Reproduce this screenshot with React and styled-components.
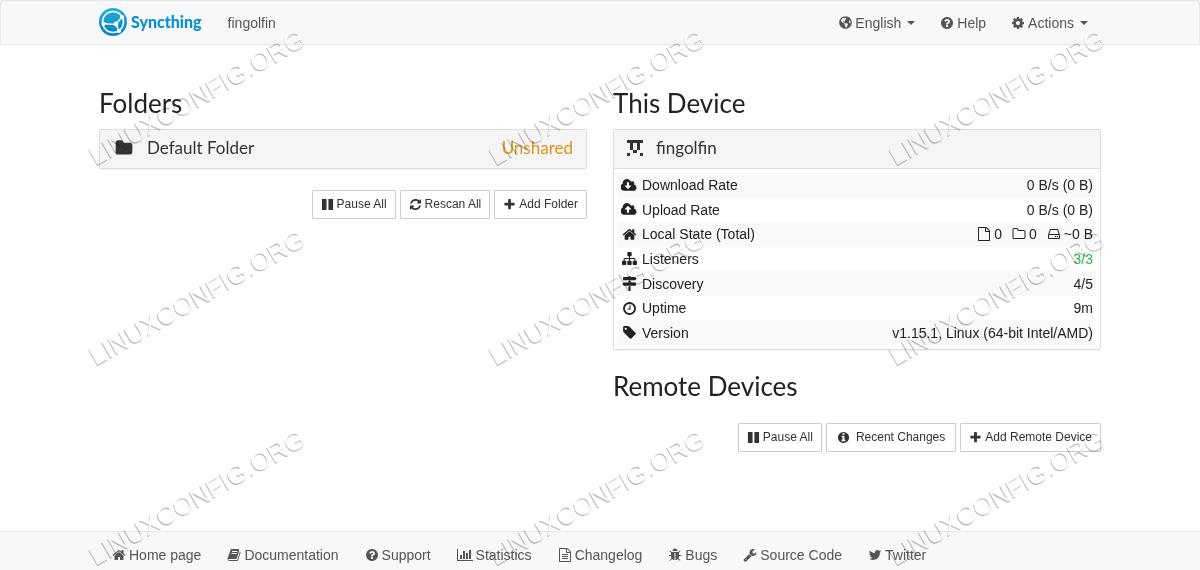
import React from "react";
import styled, { createGlobalStyle, css } from "styled-components";
import { FaGlobeAmericas } from "react-icons/fa";

const Global = createGlobalStyle`
  *, *::before, *::after { box-sizing: border-box; }
  body {
    margin: 0;
    background: #fff;
    color: #222;
    font: 14px/20px "Liberation Sans", Arial, sans-serif;
  }
`;

const disc =
  "q0 209-103 385.5t-279.5 279.5-385.5 103-385.5-103-279.5-279.5-103-385.5 103-385.5 279.5-279.5 385.5-103 385.5 103 279.5 279.5 103 385.5z";
const cloud =
  "q0 159-112.5 271.5t-271.5 112.5h-1088q-185 0-316.5-131.5t-131.5-316.5q0-130 70-240t188-165q-2-30-2-43 0-212 150-362t362-150q156 0 285.5 87t188.5 231q71-62 166-62 106 0 181 75t75 181q0 76-41 138 130 31 213.5 135.5t83.5 238.5z";
const sheet =
  "M1596 380q28 28 48 76t20 88v1152q0 40-28 68t-68 28h-1344q-40 0-68-28t-28-68v-1600q0-40 28-68t68-28h896q40 0 88 20t76 48zm-444-244v376h376q-10-29-22-41l-313-313q-12-12-41-22zm384 1528v-1024h-416q-40 0-68-28t-28-68v-416h-768v1536h1280z";

const glyphs = {
  home: "M1472 992v480q0 26-19 45t-45 19h-384v-384h-256v384h-384q-26 0-45-19t-19-45v-480q0-1 .5-3t.5-3l575-474 575 474q1 2 1 6zm223-69l-62 74q-8 9-21 11h-3q-13 0-21-7l-692-577-692 577q-12 8-24 7-13-2-21-11l-62-74q-8-10-7-23.5t11-21.5l719-599q32-26 76-26t76 26l244 204v-195q0-14 9-23t23-9h192q14 0 23 9t9 23v408l219 182q10 8 11 21.5t-7 23.5z",
  question:
    "M1024 1376v-192q0-14-9-23t-23-9h-192q-14 0-23 9t-9 23v192q0 14 9 23t23 9h192q14 0 23-9t9-23zm256-672q0-88-55.5-163t-138.5-116-170-41q-243 0-371 213-15 24 8 42l132 100q7 6 19 6 16 0 25-12 53-68 86-92 34-24 86-24 48 0 85.5 26t37.5 59q0 38-20 61t-68 45q-63 28-115.5 86.5t-52.5 125.5v36q0 14 9 23t23 9h192q14 0 23-9t9-23q0-19 21.5-49.5t54.5-49.5q32-18 49-28.5t46-35 44.5-48 28-60.5 12.5-81zm384 192" + disc,
  cog: "M1152 896q0-106-75-181t-181-75-181 75-75 181 75 181 181 75 181-75 75-181zm512-109v222q0 12-8 23t-20 13l-185 28q-19 54-39 91 35 50 107 138 10 12 10 25t-9 23q-27 37-99 108t-94 71q-12 0-26-9l-138-108q-44 23-91 38-16 136-29 186-7 28-36 28h-222q-14 0-24.5-8.5t-11.5-21.5l-28-184q-49-16-90-37l-141 107q-10 9-25 9-14 0-25-11-126-114-165-168-7-10-7-23 0-12 8-23 15-21 51-66.5t54-70.5q-27-50-41-99l-183-27q-13-2-21-12.5t-8-23.5v-222q0-12 8-23t19-13l186-28q14-46 39-92-40-57-107-138-10-12-10-24 0-10 9-23 26-36 98.5-107.5t94.5-71.5q13 0 26 10l138 107q44-23 91-38 16-136 29-186 7-28 36-28h222q14 0 24.5 8.5t11.5 21.5l28 184q49 16 90 37l142-107q9-9 24-9 13 0 25 10 129 119 165 170 7 8 7 22 0 12-8 23-15 21-51 66.5t-54 70.5q26 50 41 98l183 28q13 2 21 12.5t8 23.5z",
  plus: "M1600 736v192q0 40-28 68t-68 28h-416v416q0 40-28 68t-68 28h-192q-40 0-68-28t-28-68v-416h-416q-40 0-68-28t-28-68v-192q0-40 28-68t68-28h416v-416q0-40 28-68t68-28h192q40 0 68 28t28 68v416h416q40 0 68 28t28 68z",
  pause:
    "M1664 192v1408q0 26-19 45t-45 19h-512q-26 0-45-19t-19-45v-1408q0-26 19-45t45-19h512q26 0 45 19t19 45zm-896 0v1408q0 26-19 45t-45 19h-512q-26 0-45-19t-19-45v-1408q0-26 19-45t45-19h512q26 0 45 19t19 45z",
  refresh:
    "M1639 1056q0 5-1 7-64 268-268 434.5t-478 166.5q-146 0-282.5-55t-243.5-157l-129 129q-19 19-45 19t-45-19-19-45v-448q0-26 19-45t45-19h448q26 0 45 19t19 45-19 45l-137 137q71 66 161 102t187 36q134 0 250-65t186-179q11-17 53-117 8-23 30-23h192q13 0 22.5 9.5t9.5 22.5zm25-800v448q0 26-19 45t-45 19h-448q-26 0-45-19t-19-45 19-45l138-138q-148-137-349-137-134 0-250 65t-186 179q-11 17-53 117-8 23-30 23h-199q-13 0-22.5-9.5t-9.5-22.5v-7q65-268 270-434.5t480-166.5q146 0 284 55.5t245 156.5l130-129q19-19 45-19t45 19 19 45z",
  folder:
    "M1728 608v704q0 92-66 158t-158 66h-1216q-92 0-158-66t-66-158v-960q0-92 66-158t158-66h320q92 0 158 66t66 158v32h672q92 0 158 66t66 158z",
  folderOpenLine:
    "M1600 1312v-704q0-40-28-68t-68-28h-704q-40 0-68-28t-28-68v-64q0-40-28-68t-68-28h-320q-40 0-68 28t-28 68v960q0 40 28 68t68 28h1216q40 0 68-28t28-68zm128-704v704q0 92-66 158t-158 66h-1216q-92 0-158-66t-66-158v-960q0-92 66-158t158-66h320q92 0 158 66t66 158v32h672q92 0 158 66t66 158z",
  file: sheet,
  fileText:
    sheet +
    "m-1024-864q0-14 9-23t23-9h704q14 0 23 9t9 23v64q0 14-9 23t-23 9h-704q-14 0-23-9t-9-23v-64zm736 224q14 0 23 9t9 23v64q0 14-9 23t-23 9h-704q-14 0-23-9t-9-23v-64q0-14 9-23t23-9h704zm0 256q14 0 23 9t9 23v64q0 14-9 23t-23 9h-704q-14 0-23-9t-9-23v-64q0-14 9-23t23-9h704z",
  clock:
    "M1024 544v448q0 14-9 23t-23 9h-320q-14 0-23-9t-9-23v-64q0-14 9-23t23-9h224v-352q0-14 9-23t23-9h64q14 0 23 9t9 23zm416 352q0-148-73-273t-198-198-273-73-273 73-198 198-73 273 73 273 198 198 273 73 273-73 198-198 73-273zm224 0" + disc,
  info:
    "M1152 1376v-160q0-14-9-23t-23-9h-96v-512q0-14-9-23t-23-9h-320q-14 0-23 9t-9 23v160q0 14 9 23t23 9h96v320h-96q-14 0-23 9t-9 23v160q0 14 9 23t23 9h448q14 0 23-9t9-23zm-128-896v-160q0-14-9-23t-23-9h-192q-14 0-23 9t-9 23v160q0 14 9 23t23 9h192q14 0 23-9t9-23zm640 416" + disc,
  tag: "M576 448q0-53-37.5-90.5t-90.5-37.5-90.5 37.5-37.5 90.5 37.5 90.5 90.5 37.5 90.5-37.5 37.5-90.5zm1067 576q0 53-37 90l-491 492q-39 37-91 37-53 0-90-37l-715-716q-38-37-64.5-101t-26.5-117v-416q0-52 38-90t90-38h416q53 0 117 26.5t102 64.5l715 714q37 39 37 91z",
  download:
    "M1216 928q0-14-9-23t-23-9h-224v-352q0-13-9.5-22.5t-22.5-9.5h-192q-13 0-22.5 9.5t-9.5 22.5v352h-224q-13 0-22.5 9.5t-9.5 22.5q0 14 9 23l352 352q9 9 23 9t23-9l351-351q10-12 10-24zm640 224" + cloud,
  upload:
    "M1216 864q0-14-9-23l-352-352q-9-9-23-9t-23 9l-351 351q-10 12-10 24 0 14 9 23t23 9h224v352q0 13 9.5 22.5t22.5 9.5h192q13 0 22.5-9.5t9.5-22.5v-352h224q13 0 22.5-9.5t9.5-22.5zm640 288" + cloud,
  sitemap:
    "M1792 1248v320q0 40-28 68t-68 28h-320q-40 0-68-28t-28-68v-320q0-40 28-68t68-28h96v-192h-512v192h96q40 0 68 28t28 68v320q0 40-28 68t-68 28h-320q-40 0-68-28t-28-68v-320q0-40 28-68t68-28h96v-192h-512v192h96q40 0 68 28t28 68v320q0 40-28 68t-68 28h-320q-40 0-68-28t-28-68v-320q0-40 28-68t68-28h96v-192q0-52 38-90t90-38h512v-192h-96q-40 0-68-28t-28-68v-320q0-40 28-68t68-28h320q40 0 68 28t28 68v320q0 40-28 68t-68 28h-96v192h512q52 0 90 38t38 90v192h96q40 0 68 28t28 68z",
  signs:
    "M1745 297q10 10 10 23t-10 23l-141 141q-28 28-68 28h-1344q-26 0-45-19t-19-45v-256q0-26 19-45t45-19h576v-64q0-26 19-45t45-19h128q26 0 45 19t19 45v64h512q40 0 68 28zm-977 919h256v512q0 26-19 45t-45 19h-128q-26 0-45-19t-19-45v-512zm832-448q26 0 45 19t19 45v256q0 26-19 45t-45 19h-1344q-40 0-68-28l-141-141q-10-10-10-23t10-23l141-141q28-28 68-28h512v-192h256v192h576z",
  disk: "M1168 1216q0 33-23.5 56.5t-56.5 23.5-56.5-23.5-23.5-56.5 23.5-56.5 56.5-23.5 56.5 23.5 23.5 56.5zm256 0q0 33-23.5 56.5t-56.5 23.5-56.5-23.5-23.5-56.5 23.5-56.5 56.5-23.5 56.5 23.5 23.5 56.5zm112 160v-320q0-13-9.5-22.5t-22.5-9.5h-1216q-13 0-22.5 9.5t-9.5 22.5v320q0 13 9.5 22.5t22.5 9.5h1216q13 0 22.5-9.5t9.5-22.5zm-1230-480h1180l-157-482q-4-13-16-21.5t-26-8.5h-782q-14 0-26 8.5t-16 21.5zm1358 160v320q0 66-47 113t-113 47h-1216q-66 0-113-47t-47-113v-320q0-25 16-75l197-606q17-53 63-86t101-33h782q55 0 101 33t63 86l197 606q16 50 16 75z",
  book: "M1703 478q40 57 18 129l-275 906q-19 64-76.5 107.5t-122.5 43.5h-923q-77 0-148.5-53.5t-99.5-131.5q-24-67-2-127 0-4 3-27t4-37q1-8-3-21.5t-3-19.5q2-11 8-21t16.5-23.5 16.5-23.5q23-38 45-91.5t30-91.5q3-10 .5-30t-.5-28q3-11 17-28t17-23q21-36 42-92t25-90q1-9-2.5-32t.5-28q4-13 22-30.5t22-22.5q19-26 42.5-84.5t27.5-96.5q1-8-3-25.5t-2-26.5q2-8 9-18t18-23 17-21q8-12 16.5-30.5t15-35 16-36 19.5-32 26.5-23.5 36-11.5 47.5 5.5l-1 3q38-9 51-9h761q74 0 114 56t18 130l-274 906q-36 119-71.5 153.5t-128.5 34.5h-869q-27 0-38 15-11 16-1 43 24 70 144 70h923q29 0 56-15.5t35-41.5l300-987q7-22 5-57 38 15 59 43zm-1064 2q-4 13 2 22.5t20 9.5h608q13 0 25.5-9.5t16.5-22.5l21-64q4-13-2-22.5t-20-9.5h-608q-13 0-25.5 9.5t-16.5 22.5zm-83 256q-4 13 2 22.5t20 9.5h608q13 0 25.5-9.5t16.5-22.5l21-64q4-13-2-22.5t-20-9.5h-608q-13 0-25.5 9.5t-16.5 22.5z",
  chart:
    "M640 896v512h-256v-512h256zm384-512v1024h-256v-1024h256zm1024 1152v128h-2048v-1536h128v1408h1920zm-640-896v768h-256v-768h256zm384-384v1152h-256v-1152h256z",
  bug: "M1696 960q0 26-19 45t-45 19h-224q0 171-67 290l208 209q19 19 19 45t-19 45q-18 19-45 19t-45-19l-198-197q-5 5-15 13t-42 28.5-65 36.5-82 29-97 13v-896h-128v896q-51 0-101.5-13.5t-87-33-66-39-43.5-32.5l-15-14-183 207q-20 21-48 21-24 0-43-16-19-18-20.5-44.5t15.5-46.5l202-227q-58-114-58-274h-224q-26 0-45-19t-19-45 19-45 45-19h224v-294l-173-173q-19-19-19-45t19-45 45-19 45 19l173 173h844l173-173q19-19 45-19t45 19 19 45-19 45l-173 173v294h224q26 0 45 19t19 45zm-480-576h-640q0-133 93.5-226.5t226.5-93.5 226.5 93.5 93.5 226.5z",
  wrench:
    "M448 1472q0-26-19-45t-45-19-45 19-19 45 19 45 45 19 45-19 19-45zm644-420l-682 682q-37 37-90 37-52 0-91-37l-106-108q-38-36-38-90 0-53 38-91l681-681q39 98 114.5 173.5t173.5 114.5zm634-435q0 39-23 106-47 134-164.5 217.5t-258.5 83.5q-185 0-316.5-131.5t-131.5-316.5 131.5-316.5 316.5-131.5q58 0 121.5 16.5t107.5 46.5q16 11 16 28t-16 28l-293 169v224l193 107q5-3 79-48.5t135.5-81 70.5-35.5q15 0 23.5 10t8.5 25z",
  twitter:
    "M1684 408q-67 98-162 167 1 14 1 42 0 130-38 259.5t-115.5 248.5-184.5 210.5-258 146-323 54.5q-271 0-496-145 35 4 78 4 225 0 401-138-105-2-188-64.5t-114-159.5q33 5 61 5 43 0 85-11-112-23-185.5-111.5t-73.5-205.5v-4q68 38 146 41-66-44-105-115t-39-154q0-88 44-163 121 149 294.5 238.5t371.5 99.5q-8-38-8-74 0-134 94.5-228.5t228.5-94.5q140 0 236 102 109-21 205-78-37 115-142 178 93-10 186-50z",
};
const wide = { chart: 2048, download: 1920, upload: 1920 };

const Glyph = styled.svg`
  height: ${(p) => p.$size || 14}px;
  flex: none;
  fill: currentColor;
`;

function Icon({ name, size }) {
  return (
    <Glyph $size={size} viewBox={`0 0 ${wide[name] || 1792} 1792`} aria-hidden="true">
      <path d={glyphs[name]} />
    </Glyph>
  );
}

const Page = styled.div`
  position: relative;
  min-height: 100vh;
  display: flex;
  flex-direction: column;
  background: #fff;
`;

const Container = styled.div`
  width: 100%;
  max-width: 1034px;
  margin: 0 auto;
  padding: 0 16px;
`;

const NavBar = styled.header`
  background: #f8f8f8;
  border: 1px solid #e7e7e7;
  border-radius: 2px;
`;

const NavRow = styled(Container)`
  display: flex;
  align-items: center;
  height: 43px;
`;

const Brand = styled.a`
  display: flex;
  align-items: center;
  gap: 4px;
  padding-bottom: 1px;
  color: #0891d1;
  font: 900 16px/20px Lato, sans-serif;
  text-decoration: none;
  svg { width: 28px; height: 28px; }
`;

const DeviceName = styled.span`
  margin-left: 26px;
  color: #555;
`;

const NavMenu = styled.nav`
  display: flex;
  gap: 25px;
  margin-left: auto;
  padding-right: 13px;
`;

const navItem = css`
  display: inline-flex;
  align-items: center;
  gap: 3px;
  padding: 0;
  border: 0;
  background: none;
  color: #555;
  font: inherit;
  text-decoration: none;
`;
const NavLink = styled.a`${navItem}`;
const NavButton = styled.button`${navItem}`;

const Caret = styled.span`
  margin-left: 3px;
  border: 4px solid transparent;
  border-top-color: currentColor;
  border-bottom: 0;
`;

const Columns = styled(Container).attrs({ as: "main" })`
  display: grid;
  grid-template-columns: 1fr 1fr;
  gap: 26px;
  padding-top: 44px;
  padding-bottom: 40px;
`;

const Heading = styled.h2`
  margin: 0;
  padding-bottom: 12px;
  font: 400 26px/28px Lato, sans-serif;
`;

const Panel = styled.section`
  border: 1px solid #ddd;
  border-radius: 2px;
  box-shadow: 0 1px 1px rgba(0, 0, 0, 0.05);
`;

const PanelHead = styled.button`
  display: flex;
  align-items: center;
  gap: ${(p) => (p.$device ? 13 : 14)}px;
  width: 100%;
  height: 38px;
  padding: 0 13px 2px ${(p) => (p.$device ? 13 : 15)}px;
  border: 0;
  background: #f5f5f5;
  color: #333;
  font: 400 17px/20px Lato, sans-serif;
`;

const Status = styled.span`
  margin-left: auto;
  color: #de9319;
`;

const PanelBody = styled.div`
  padding: 4px;
  border-top: 1px solid #ddd;
`;

const Facts = styled.table`
  width: 100%;
  height: 172px;
  border-collapse: collapse;
  tr:nth-child(odd) { background: #f9f9f9; }
  th, td { padding: 0 3px; }
  th { text-align: left; font-weight: 400; }
`;

const Label = styled.span`
  display: grid;
  grid-template-columns: 16px 1fr;
  align-items: center;
  justify-items: center;
  gap: 5px;
  & > span { justify-self: start; }
`;

const Value = styled.span`
  display: flex;
  justify-content: flex-end;
  align-items: center;
  gap: 10px;
  color: ${(p) => (p.$good ? "#29b74e" : "inherit")};
`;

const Amount = styled.span`
  display: flex;
  align-items: center;
  gap: 3px;
`;

const Actions = styled.div`
  display: flex;
  justify-content: flex-end;
  gap: 4px;
  padding-top: ${(p) => (p.$tight ? 11 : 21)}px;
`;

const Button = styled.button`
  display: flex;
  align-items: center;
  gap: ${(p) => (p.$spaced ? 6 : 3)}px;
  height: 29px;
  padding: 0 ${(p) => (p.$spaced ? 10 : 8)}px 1px;
  border: 1px solid #ccc;
  border-radius: 1px;
  background: #fff;
  color: #333;
  font: 12px/18px "Liberation Sans", Arial, sans-serif;
`;

const Block = styled.div`
  margin-top: 22px;
`;

const Footer = styled.footer`
  margin-top: auto;
  padding: 13px 0 5px;
  border-top: 1px solid #e7e7e7;
  background: #f8f8f8;
`;

const FooterRow = styled(Container)`
  display: flex;
  flex-wrap: wrap;
  gap: 26px;
  padding-left: 29px;
`;

const Watermarks = styled.div`
  position: absolute;
  inset: 0;
  display: grid;
  grid-template-columns: repeat(3, 1fr);
  grid-auto-rows: 200px;
  place-items: center;
  overflow: hidden;
  pointer-events: none;
  mix-blend-mode: multiply;
`;

const Mark = styled.span`
  margin: 0 6px 6px 0;
  transform: rotate(-30deg);
  color: #fff;
  font-size: 26px;
  line-height: 28px;
  text-shadow: -1px 1px 0 #bbb;
`;

const Logo = () => (
  <svg viewBox="0 0 28 28" aria-hidden="true">
    <defs>
      <linearGradient id="brand" x1="0" y1="0" x2="0" y2="1">
        <stop offset="0" stopColor="#24b0d6" />
        <stop offset="1" stopColor="#0a7fc4" />
      </linearGradient>
    </defs>
    <circle cx="14" cy="14" r="14" fill="url(#brand)" />
    <g fill="none" stroke="#fff" strokeWidth="1.5">
      <circle cx="14" cy="14" r="10.5" />
      <path d="M17 16L23 9M17 16L20 23M17 16Q10 17 4 15" />
    </g>
    <g fill="#fff">
      <circle cx="17" cy="16" r="2.4" />
      <circle cx="23" cy="9" r="2" />
      <circle cx="20" cy="23" r="2" />
      <circle cx="4.500" cy="16" r="2" />
    </g>
  </svg>
);

const Identicon = () => (
  <svg width="16" height="16" viewBox="0 0 5 5" fill="#333" shapeRendering="crispEdges" aria-hidden="true">
    <path d="M0 0h5v1H0zM1 1h1v2H1zM3 1h1v2H3zM2 3h1v1H2zM0 4h1v1H0zM4 4h1v1H4z" />
  </svg>
);

const facts = [
  ["download", "Download Rate", "0 B/s (0 B)"],
  ["upload", "Upload Rate", "0 B/s (0 B)"],
  ["home", "Local State (Total)", null],
  ["sitemap", "Listeners", "3/3"],
  ["signs", "Discovery", "4/5"],
  ["clock", "Uptime", "9m"],
  ["tag", "Version", "v1.15.1, Linux (64-bit Intel/AMD)"],
];

const links = [
  ["home", "Home page"],
  ["book", "Documentation"],
  ["question", "Support"],
  ["chart", "Statistics"],
  ["fileText", "Changelog"],
  ["bug", "Bugs"],
  ["wrench", "Source Code"],
  ["twitter", "Twitter"],
];

export default function App() {
  return (
    <Page>
      <Global />
      <NavBar>
        <NavRow>
          <Brand href="#"><Logo />Syncthing</Brand>
          <DeviceName>fingolfin</DeviceName>
          <NavMenu>
            <NavButton><FaGlobeAmericas size={13} />English <Caret /></NavButton>
            <NavLink href="#help"><Icon name="question" />Help</NavLink>
            <NavButton><Icon name="cog" />Actions <Caret /></NavButton>
          </NavMenu>
        </NavRow>
      </NavBar>
      <Columns>
        <div>
          <Heading>Folders</Heading>
          <Panel>
            <PanelHead>
              <Icon name="folder" size={18} />
              Default Folder
              <Status>Unshared</Status>
            </PanelHead>
          </Panel>
          <Actions>
            <Button><Icon name="pause" size={13} />Pause All</Button>
            <Button><Icon name="refresh" size={13} />Rescan All</Button>
            <Button><Icon name="plus" size={13} />Add Folder</Button>
          </Actions>
        </div>
        <div>
          <Heading>This Device</Heading>
          <Panel>
            <PanelHead $device><Identicon />fingolfin</PanelHead>
            <PanelBody>
              <Facts>
                <tbody>
                  {facts.map(([icon, label, value]) => (
                    <tr key={label}>
                      <th scope="row"><Label><Icon name={icon} size={15} /><span>{label}</span></Label></th>
                      <td>
                        {value ? (
                          <Value $good={label === "Listeners"}>{value}</Value>
                        ) : (
                          <Value>
                            <Amount><Icon name="file" />0</Amount>
                            <Amount><Icon name="folderOpenLine" />0</Amount>
                            <Amount><Icon name="disk" />~0 B</Amount>
                          </Value>
                        )}
                      </td>
                    </tr>
                  ))}
                </tbody>
              </Facts>
            </PanelBody>
          </Panel>
          <Block>
            <Heading>Remote Devices</Heading>
            <Actions $tight>
              <Button><Icon name="pause" size={13} />Pause All</Button>
              <Button $spaced><Icon name="info" size={13} />Recent Changes</Button>
              <Button><Icon name="plus" size={13} />Add Remote Device</Button>
            </Actions>
          </Block>
        </div>
      </Columns>
      <Footer>
        <FooterRow as="nav">
          {links.map(([icon, text]) => (
            <NavLink href="#" key={text}><Icon name={icon} />{text}</NavLink>
          ))}
        </FooterRow>
      </Footer>
      <Watermarks aria-hidden="true">
        {Array.from({ length: 9 }, (_, i) => <Mark key={i}>LINUXCONFIG.ORG</Mark>)}
      </Watermarks>
    </Page>
  );
}
